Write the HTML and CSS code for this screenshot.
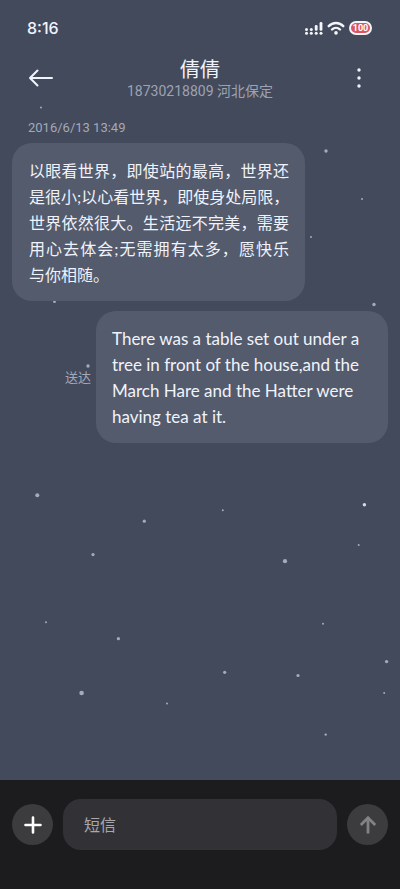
FILE: index.html
```html
<!DOCTYPE html>
<html lang="zh-CN">
<head>
<meta charset="utf-8">
<meta name="viewport" content="width=device-width, initial-scale=1">
<title>倩倩</title>
<link rel="stylesheet" href="styles.css">
</head>
<body>
<svg class="snow" viewBox="0 0 400 780" preserveAspectRatio="xMidYMin slice" aria-hidden="true">
  <circle cx="41" cy="107.500" r="1"/><circle cx="326" cy="151" r="1.700"/>
  <circle cx="362" cy="199" r="1"/><circle cx="311" cy="237" r="1"/>
  <circle cx="54.500" cy="301.500" r="1.500"/><circle cx="374" cy="304.500" r="1.700"/>
  <circle cx="88" cy="366" r="1.700"/><circle cx="37.300" cy="495.300" r="2"/>
  <circle cx="144.300" cy="521.200" r="1.600"/><circle cx="222.800" cy="510.200" r="1"/>
  <circle cx="364.400" cy="504.700" r="1.700" class="bright"/><circle cx="93" cy="554.600" r="1.600"/>
  <circle cx="285" cy="561.200" r="2.100"/><circle cx="358.700" cy="545" r="1"/>
  <circle cx="46" cy="622.300" r="1"/><circle cx="118.400" cy="638.700" r="1.600"/>
  <circle cx="323" cy="623.700" r="1"/><circle cx="386.600" cy="661.600" r="1.700"/>
  <circle cx="224.700" cy="672.300" r="1.600"/><circle cx="298" cy="675.500" r="1.600"/>
  <circle cx="81.600" cy="693" r="2.300"/><circle cx="167" cy="703.400" r="1"/>
  <circle cx="384.200" cy="693" r="1"/><circle cx="325.700" cy="734.600" r="1.200"/>
</svg>

<div class="status">
  <time class="clock">8:16</time>
  <div class="status-icons">
    <svg width="19" height="14" viewBox="0 0 19 14" aria-hidden="true">
      <g fill="#f5f6fa">
        <circle cx="2.500" cy="8.500" r="1.500"/><circle cx="2.500" cy="12.300" r="1.500"/>
        <circle cx="7.300" cy="8.500" r="1.500"/><circle cx="7.300" cy="12.300" r="1.500"/>
        <rect x="10.800" y="4" width="2.800" height="5.800" rx="1.300"/><circle cx="12.200" cy="12.300" r="1.500"/>
        <rect x="15.600" y="1" width="2.800" height="8.800" rx="1.300"/><circle cx="17" cy="12.300" r="1.500"/>
      </g>
    </svg>
    <svg width="18" height="14" viewBox="0 0 18 14" aria-hidden="true">
      <g fill="none" stroke="#f5f6fa" stroke-width="2.400" stroke-linecap="round">
        <path d="M1.700 5.200C5.700 1 12.300 1 16.300 5.200"/>
        <path d="M5 8.500C7.300 6.300 10.700 6.300 13 8.500"/>
      </g>
      <circle cx="9" cy="11.900" r="1.800" fill="#f5f6fa"/>
    </svg>
    <span class="battery">100</span>
  </div>
</div>

<header class="header">
  <button class="icon-btn" type="button" aria-label="返回">
    <svg width="26" height="20" viewBox="0 0 26 20" fill="none" stroke="#f0f3fb" stroke-width="2" stroke-linecap="round" stroke-linejoin="round"><path d="M24 10H2M9.500 2.500L2 10L9.500 17.500"/></svg>
  </button>
  <div class="contact">
    <h1>倩倩</h1>
    <p>18730218809 河北保定</p>
  </div>
  <button class="icon-btn more" type="button" aria-label="更多">
    <svg width="6" height="20" viewBox="0 0 6 20" fill="#f0f3fb"><circle cx="3" cy="2" r="1.700"/><circle cx="3" cy="10" r="1.700"/><circle cx="3" cy="18" r="1.700"/></svg>
  </button>
</header>

<main class="thread">
  <time class="date">2016/6/13 13:49</time>
  <div class="row">
    <p class="bubble received">
      <span class="line">以眼看世界，即使站的最高，世界还</span>
      <span class="line">是很小;以心看世界，即使身处局限，</span>
      <span class="line">世界依然很大。生活远不完美，需要</span>
      <span class="line">用心去体会;无需拥有太多，愿快乐</span>
      <span class="line last">与你相随。</span>
    </p>
  </div>
  <div class="row sent-row">
    <span class="delivered">送达</span>
    <p class="bubble sent" lang="en">There was a table set out under a<br>tree in front of the house,and the<br>March Hare and the Hatter were<br>having tea at it.</p>
  </div>
</main>

<form class="composer">
  <button class="round" type="button" aria-label="添加">
    <svg width="18" height="18" viewBox="0 0 18 18" stroke="#fff" stroke-width="2.600" stroke-linecap="round"><path d="M9 1.500V16.500M1.500 9H16.500"/></svg>
  </button>
  <input type="text" placeholder="短信" aria-label="短信">
  <button class="round send" type="submit" aria-label="发送">
    <svg width="18" height="20" viewBox="0 0 18 20" fill="none" stroke="#828286" stroke-width="2.800"><path d="M9 18.500V3M1.800 10L9 2.800L16.200 10"/></svg>
  </button>
</form>
</body>
</html>
```

FILE: styles.css
```css
* {
  box-sizing: border-box;
}

body {
  position: relative;
  display: flex;
  flex-direction: column;
  min-height: 100vh;
  margin: 0;
  background: #434a5c;
  color: #f0f3fb;
  font-family: Lato, "Noto Sans CJK SC", sans-serif;
}

h1,
p {
  margin: 0;
  font-weight: 400;
}

button {
  padding: 0;
  border: 0;
  background: none;
}

svg {
  display: block;
}

.snow {
  position: absolute;
  top: 0;
  left: 0;
  z-index: -1;
  width: 100%;
  fill: #a3abbd;
}

.bright {
  fill: #d5dbe8;
}

.status {
  display: flex;
  align-items: center;
  justify-content: space-between;
  height: 56px;
  padding: 0 28px 0 27px;
}

.clock {
  font: 500 16px Inter, sans-serif;
}

.status-icons {
  display: flex;
  align-items: center;
  gap: 4px;
}

.battery {
  display: flex;
  align-items: center;
  justify-content: center;
  width: 23px;
  height: 14px;
  border: 2px solid #f5f6fa;
  border-radius: 7px;
  background: #d95562;
  color: #fff;
  font: 700 9px Roboto, sans-serif;
}

.header {
  display: flex;
  align-items: center;
  justify-content: space-between;
  height: 44px;
  padding: 0 28px;
}

.icon-btn {
  display: flex;
  align-items: center;
  width: 26px;
  height: 44px;
}

.more {
  justify-content: center;
}

.contact {
  padding-top: 2px;
  text-align: center;
}

.contact h1 {
  font-size: 20px;
  line-height: 24px;
}

.contact p {
  color: #9da3b3;
  font-family: Roboto, "Noto Sans CJK SC", sans-serif;
  font-size: 14px;
  line-height: 20px;
}

.thread {
  flex: 1;
  padding: 18px 12px;
}

.date {
  display: block;
  padding: 0 16px;
  color: #a3a9b8;
  font-family: Roboto, sans-serif;
  font-size: 13px;
  line-height: 20px;
}

.row {
  display: flex;
  margin-top: 5px;
}

.sent-row {
  align-items: center;
  justify-content: flex-end;
  gap: 5px;
  margin-top: 10px;
}

.bubble {
  padding: 15px 16px 13px;
  border-radius: 20px;
  background: #545b6d;
  line-height: 26px;
}

.received {
  width: 293px;
  padding-left: 17px;
  font-size: 16px;
}

.line {
  display: block;
  text-align-last: justify;
  white-space: nowrap;
}

.last {
  text-align-last: left;
}

.sent {
  width: 292px;
  font-size: 17px;
}

.delivered {
  color: #a3a9b8;
  font-size: 13px;
  line-height: 20px;
}

.composer {
  display: flex;
  align-items: center;
  gap: 10px;
  padding: 19px 12px 39px;
  background: #1c1c1f;
}

.round {
  display: flex;
  flex: none;
  align-items: center;
  justify-content: center;
  width: 41px;
  height: 41px;
  border-radius: 50%;
  background: #3c3c3e;
}

.composer input {
  flex: 1;
  min-width: 0;
  height: 51px;
  padding: 0 21px;
  border: 0;
  border-radius: 18px;
  background: #323236;
  color: #f0f3fb;
  font: 16px Lato, "Noto Sans CJK SC", sans-serif;
}

.composer input::placeholder {
  color: #a8a8ac;
  opacity: 1;
}
```
